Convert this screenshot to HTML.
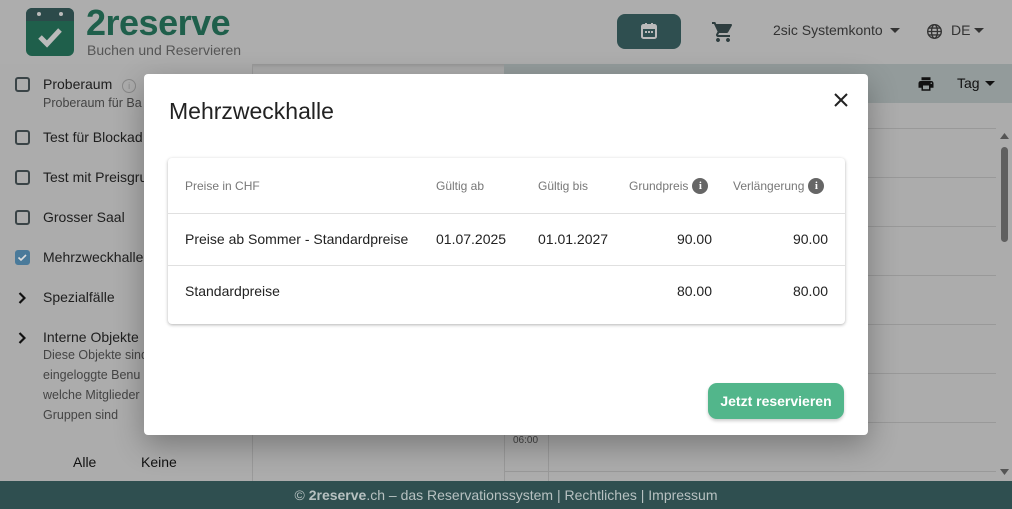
<!DOCTYPE html>
<html style="background:#acacac"><head><meta charset="utf-8">
<style>
*{box-sizing:border-box;margin:0;padding:0}
body{width:1012px;height:509px;overflow:hidden;background:#acacac;font-family:"Liberation Sans",Arial,sans-serif;position:relative;color:#1f1f1f}
.abs{position:absolute}
.hdr{left:0;top:0;width:1012px;height:64px;background:#adadad;box-shadow:0 2px 4px rgba(0,0,0,.15)}
.side{left:0;top:64px;width:253px;height:417px;border-right:1px solid #9a9a9a;background:#acacac}
.item{position:absolute;left:43px;font-size:14px;color:#1e1e1e}
.cb{position:absolute;left:15px;width:15px;height:15px;border:2px solid #3a4447;border-radius:3px}
.sub{position:absolute;left:43px;font-size:12.5px;color:#444}
.chev{position:absolute;left:17px;top:0}
.line{position:absolute;left:548px;width:448px;height:1px;background:#999}
.footer{left:0;top:481px;width:1012px;height:28px;background:#2f4f50;color:#b7c1c1;font-size:14px;text-align:center;line-height:28px}
.modal{left:144px;top:74px;width:724px;height:361px;background:#fff;border-radius:4px;box-shadow:0 10px 30px rgba(0,0,0,.3)}
.card{position:absolute;left:24px;top:84px;width:677px;height:166px;border-radius:4px;box-shadow:0 1px 3px rgba(0,0,0,.3);background:#fff}
.th{position:absolute;top:20px;font-size:12px;color:#777;display:flex;align-items:center;height:16px}
.td{position:absolute;font-size:14px;color:#222}
.r{text-align:right}
.info{display:inline-block;width:16px;height:16px;border-radius:50%;background:#666;color:#fff;font-size:11px;font-weight:bold;text-align:center;line-height:16px;margin-left:4px;font-family:"Liberation Serif",serif}
</style></head><body>
<div class="abs hdr">
  <svg class="abs" style="left:26px;top:8px" width="48" height="48" viewBox="0 0 48 48"><rect x="0" y="0" width="48" height="48" rx="6" fill="#1f5f4b"/><rect x="0" y="0" width="48" height="13" rx="6" fill="#2c4a4a"/><rect x="0" y="8" width="48" height="5" fill="#2c4a4a"/><circle cx="13" cy="6" r="2" fill="#bbb"/><circle cx="35" cy="6" r="2" fill="#bbb"/><path d="M14 29 L21 36 L34 22" stroke="#bbb" stroke-width="5" fill="none"/></svg>
  <div class="abs" style="left:86px;top:2px;font-size:36px;font-weight:bold;color:#1f5f4b;letter-spacing:-0.5px">2reserve</div>
  <div class="abs" style="left:87px;top:42px;font-size:14px;color:#555">Buchen und Reservieren</div>
  <div class="abs" style="left:617px;top:14px;width:64px;height:35px;background:#2f4f50;border-radius:8px"></div>
  <svg class="abs" style="left:640px;top:22px" width="18" height="18" viewBox="0 0 18 18"><rect x="2" y="3" width="14" height="13" rx="1.5" fill="none" stroke="#bbb" stroke-width="2"/><rect x="2" y="3" width="14" height="4" fill="#bbb"/><rect x="5" y="1" width="2" height="3" fill="#bbb"/><rect x="11" y="1" width="2" height="3" fill="#bbb"/><rect x="5" y="9" width="2" height="2" fill="#bbb"/><rect x="8" y="9" width="2" height="2" fill="#bbb"/><rect x="11" y="9" width="2" height="2" fill="#bbb"/></svg>
  <svg class="abs" style="left:711px;top:20px" width="24" height="24" viewBox="0 0 24 24"><path fill="#2e3d3f" d="M7 18c-1.1 0-2 .9-2 2s.9 2 2 2 2-.9 2-2-.9-2-2-2zM1 2v2h2l3.6 7.59-1.350 2.45c-.16.28-.25.61-.25.96 0 1.1.9 2 2 2h12v-2H7.42c-.14 0-.25-.11-.25-.25l.03-.12.9-1.630h7.45c.75 0 1.41-.41 1.75-1.03l3.58-6.49A1 1 0 0 0 20 4H5.21l-.94-2H1zm16 16c-1.1 0-2 .9-2 2s.9 2 2 2 2-.9 2-2-.9-2-2-2z"/></svg>
  <div class="abs" style="left:773px;top:22px;font-size:14px;color:#333">2sic Systemkonto</div>
  <svg class="abs" style="left:890px;top:28px" width="10" height="6"><path d="M0 0h10L5 5z" fill="#333"/></svg>
  <svg class="abs" style="left:926px;top:23px" width="17" height="17" viewBox="0 0 20 20" fill="none" stroke="#333" stroke-width="1.6"><circle cx="10" cy="10" r="8"/><ellipse cx="10" cy="10" rx="3.5" ry="8"/><path d="M2 10h16M3.5 6h13M3.5 14h13"/></svg>
  <div class="abs" style="left:951px;top:22px;font-size:14px;color:#333">DE</div>
  <svg class="abs" style="left:974px;top:28px" width="10" height="6"><path d="M0 0h10L5 5z" fill="#333"/></svg>
</div>
<div class="abs side">
  <div class="cb" style="top:13px"></div><div class="item" style="top:12px">Proberaum <span style="display:inline-block;width:14px;height:14px;border:1px solid #888;border-radius:50%;font-size:9px;color:#888;text-align:center;line-height:12px;margin-left:6px">i</span></div>
  <div class="sub" style="top:32px">Proberaum für Ba</div>
  <div class="cb" style="top:66px"></div><div class="item" style="top:65px">Test für Blockad</div>
  <div class="cb" style="top:106px"></div><div class="item" style="top:105px">Test mit Preisgru</div>
  <div class="cb" style="top:146px"></div><div class="item" style="top:145px">Grosser Saal</div>
  <div class="cb" style="top:186px;background:#4a7a9a;border-color:#4a7a9a"><svg width="11" height="11" viewBox="0 0 11 11" style="position:absolute;left:0;top:0"><path d="M1.5 5.5l2.5 2.5 5-5" stroke="#ddd" stroke-width="1.6" fill="none"/></svg></div><div class="item" style="top:185px">Mehrzweckhalle</div>
  <svg class="abs" style="left:18px;top:228px" width="8" height="12"><path d="M1.5 1l5 5-5 5" stroke="#111" stroke-width="2.2" fill="none"/></svg><div class="item" style="top:225px">Spezialfälle</div>
  <svg class="abs" style="left:18px;top:268px" width="8" height="12"><path d="M1.5 1l5 5-5 5" stroke="#111" stroke-width="2.2" fill="none"/></svg><div class="item" style="top:265px">Interne Objekte</div>
  <div class="sub" style="top:284px">Diese Objekte sind</div>
  <div class="sub" style="top:304px">eingeloggte Benu</div>
  <div class="sub" style="top:324px">welche Mitglieder</div>
  <div class="sub" style="top:344px">Gruppen sind</div>
  <div class="abs" style="left:73px;top:390px;font-size:14px;color:#111">Alle</div>
  <div class="abs" style="left:141px;top:390px;font-size:14px;color:#111">Keine</div>
</div>
<div class="abs" style="left:504px;top:64px;width:1px;height:417px;background:#999"></div>
<div class="abs" style="left:504px;top:64px;width:508px;height:39px;background:#939b9b"></div>
<svg class="abs" style="left:917px;top:75px" width="18" height="18" viewBox="0 0 24 24"><path fill="#111" d="M19 8H5c-1.66 0-3 1.34-3 3v6h4v4h12v-4h4v-6c0-1.66-1.34-3-3-3zm-3 11H8v-5h8v5zm3-7c-.55 0-1-.45-1-1s.45-1 1-1 1 .45 1 1-.45 1-1 1zm-1-9H6v4h12V3z"/></svg>
<div class="abs" style="left:957px;top:75px;font-size:14px;color:#111">Tag</div>
<svg class="abs" style="left:985px;top:81px" width="10" height="6"><path d="M0 0h10L5 5z" fill="#111"/></svg>
<div class="abs" style="left:548px;top:103px;width:1px;height:378px;background:#999"></div>
<div class="line" style="top:128px;left:505px;width:491px"></div>
<div class="line" style="top:177px"></div><div class="line" style="top:226px"></div><div class="line" style="top:275px"></div><div class="line" style="top:324px"></div><div class="line" style="top:373px"></div><div class="line" style="top:422px"></div><div class="line" style="top:471px;left:505px;width:491px"></div>
<div class="abs" style="left:513px;top:435px;font-size:10px;color:#444">06:00</div>
<div class="abs" style="left:1001px;top:147px;width:7px;height:95px;background:#5f5f5f;border-radius:4px"></div>
<svg class="abs" style="left:1000px;top:133px" width="9" height="7"><path d="M0 6h9L4.5 0z" fill="#555"/></svg>
<svg class="abs" style="left:1000px;top:469px" width="9" height="7"><path d="M0 0h9L4.5 6z" fill="#555"/></svg>
<div class="abs footer">© <b>2reserve</b>.ch – das Reservationssystem | Rechtliches | Impressum</div>
<div class="abs modal">
  <div class="abs" style="left:25px;top:24px;font-size:23px;color:#222">Mehrzweckhalle</div>
  <svg class="abs" style="left:690px;top:19px" width="14" height="14" viewBox="0 0 14 14"><path d="M1 1L13 13M13 1L1 13" stroke="#222" stroke-width="2"/></svg>
  <div class="card">
    <div class="th" style="left:17px">Preise in CHF</div>
    <div class="th" style="left:268px">Gültig ab</div>
    <div class="th" style="left:370px">Gültig bis</div>
    <div class="th" style="left:461px">Grundpreis<span class="info">i</span></div>
    <div class="th" style="left:565px">Verlängerung<span class="info">i</span></div>
    <div class="abs" style="left:0;top:55px;width:677px;height:1px;background:#e0e0e0"></div>
    <div class="td" style="left:17px;top:73px">Preise ab Sommer - Standardpreise</div>
    <div class="td" style="left:268px;top:73px">01.07.2025</div>
    <div class="td" style="left:370px;top:73px">01.01.2027</div>
    <div class="td r" style="left:444px;width:100px;top:73px">90.00</div>
    <div class="td r" style="left:560px;width:100px;top:73px">90.00</div>
    <div class="abs" style="left:0;top:107px;width:677px;height:1px;background:#e0e0e0"></div>
    <div class="td" style="left:17px;top:125px">Standardpreise</div>
    <div class="td r" style="left:444px;width:100px;top:125px">80.00</div>
    <div class="td r" style="left:560px;width:100px;top:125px">80.00</div>
  </div>
  <div class="abs" style="left:564px;top:309px;width:136px;height:36px;background:#52b68b;border-radius:9px;color:#fff;font-size:14px;font-weight:bold;text-align:center;line-height:36px;box-shadow:0 2px 3px rgba(0,0,0,.2)">Jetzt reservieren</div>
</div>
</body></html>
